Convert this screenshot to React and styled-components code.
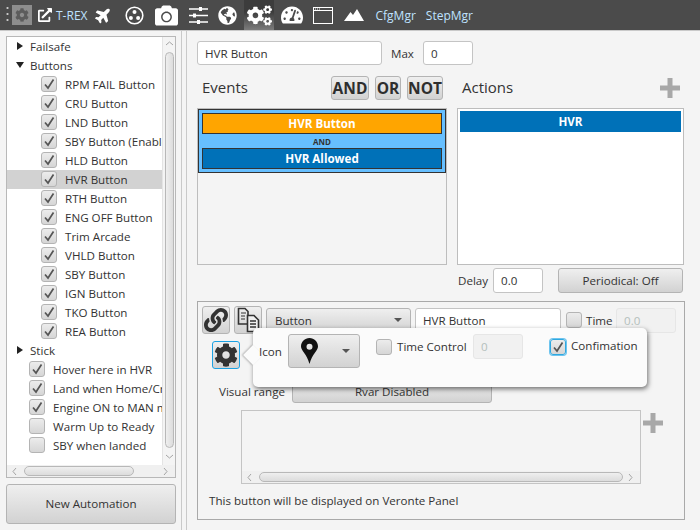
import React from "react";
import styled, { createGlobalStyle } from "styled-components";
import {
  FaCamera,
  FaCog,
  FaCogs,
  FaExternalLinkAlt,
  FaGlobeAmericas,
  FaLink,
  FaPlane,
  FaTachometerAlt,
} from "react-icons/fa";

const GlobalStyle = createGlobalStyle`
  html, body {
    margin: 0;
    padding: 0;
    background: #f4f4f4;
  }
  * {
    box-sizing: border-box;
  }
`;

const buttonFace = "linear-gradient(#efefef, #d2d2d2)";

const Page = styled.div`
  width: 700px;
  height: 530px;
  overflow: hidden;
  background: #f4f4f4;
  color: #333;
  font-family: "Open Sans", "Noto Sans", sans-serif;
  font-size: 11.6px;
`;

const Toolbar = styled.div`
  height: 30px;
  background: #4b4b4b;
  display: flex;
  align-items: center;
  padding-left: 6px;
`;

const Grip = styled.div`
  width: 3px;
  height: 20px;
  margin-right: 3px;
  background: radial-gradient(circle, #c8c8c8 1px, transparent 1.2px) 0 0 / 3px 6px;
`;

const ToolItem = styled.div`
  width: ${(p) => p.$w}px;
  margin-right: ${(p) => p.$gap || 0}px;
  height: 30px;
  display: flex;
  align-items: center;
  justify-content: center;
  color: #fff;
  flex: none;
  font-size: ${(p) => p.$size || 18}px;
`;

const SelfTile = styled(ToolItem)`
  height: 20px;
  background: #8d8d8d;
  color: #5c5c5c;
`;

const ActiveTile = styled(ToolItem)`
  background: linear-gradient(#3c3c3c 40%, #7c7c7c);
`;

const ToolText = styled.span`
  flex: none;
  color: #bfe2ff;
  font-size: 12px;
  margin-right: ${(p) => p.$gap || 0}px;
`;

const TiltedPlane = styled(FaPlane)`
  transform: rotate(-45deg);
`;

const Body = styled.div`
  height: 500px;
  display: flex;
  border-top: 1px solid #c9c9c9;
`;

const Sidebar = styled.aside`
  width: 181px;
  flex: none;
  padding: 5px 5px 5px 6px;
  display: flex;
  flex-direction: column;
  gap: 6px;
`;

const Divider = styled.div`
  width: 6px;
  flex: none;
  border-left: 1px solid #c9c9c9;
  border-right: 1px solid #c9c9c9;
`;

const TreeBox = styled.div`
  height: 442px;
  border: 1px solid #b8b8b8;
  background: #f4f4f4;
  display: flex;
  flex-direction: column;
`;

const TreeMain = styled.div`
  flex: 1;
  display: flex;
  min-height: 0;
`;

const TreeList = styled.div`
  width: 156px;
  background: #fff;
  overflow: hidden;
`;

const Row = styled.div`
  height: 19px;
  padding-left: ${(p) => p.$indent}px;
  padding-bottom: 1px;
  display: flex;
  align-items: center;
  white-space: nowrap;
  background: ${(p) => (p.$selected ? "#d2d2d2" : "transparent")};
`;

const Caret = styled.span`
  width: 0;
  height: 0;
  flex: none;
  margin-right: 6px;
  border-style: solid;
  border-color: transparent;
  ${(p) =>
    p.$open
      ? "border-width: 6px 4px 0; border-top-color: #222; margin-left: -1px;"
      : "border-width: 4px 0 4px 6px; border-left-color: #222; margin-right: 7px;"}
`;

const Check = styled.span`
  width: 16px;
  height: 16px;
  flex: none;
  border: 1px solid ${(p) => (p.$focused ? "#2fa8e0" : "#b4b4b4")};
  border-radius: 3px;
  background: linear-gradient(#ececec, #d6d6d6);
  display: flex;
  align-items: center;
  justify-content: center;
  box-shadow: ${(p) => (p.$focused ? "0 0 0 1px #6ec4ee" : "none")};
`;

const RowCheck = styled(Check)`
  margin-right: 8px;
`;

const VScroll = styled.div`
  width: 13px;
  flex: none;
  border-left: 1px solid #e4e4e4;
  display: flex;
  flex-direction: column;
  align-items: center;
  padding: 3px 0;
`;

const VThumb = styled.div`
  width: 9px;
  flex: 1;
  margin: 3px 0 5px;
  border: 1px solid #b8b8b8;
  border-radius: 5px;
  background: linear-gradient(90deg, #efefef, #dcdcdc);
`;

const HScroll = styled.div`
  height: 12px;
  flex: none;
  display: flex;
  align-items: center;
  gap: 4px;
  padding: 0 4px;
  background: #f0f0f0;
`;

const HThumb = styled.div`
  height: 10px;
  flex: ${(p) => (p.$w ? `0 0 ${p.$w}px` : 1)};
  border: 1px solid #b8b8b8;
  border-radius: 5px;
  background: linear-gradient(#efefef, #dcdcdc);
`;

const Spacer = styled.div`
  flex: 1;
`;

const ChevronSvg = styled.svg`
  flex: none;
`;

const Btn = styled.button`
  font: inherit;
  color: #333;
  padding: 0;
  border: 1px solid #b4b4b4;
  border-radius: 3px;
  background: ${buttonFace};
  display: flex;
  align-items: center;
  justify-content: center;
  flex: none;
  width: ${(p) => (p.$w ? `${p.$w}px` : "auto")};
  height: ${(p) => p.$h}px;
`;

const NewBtn = styled(Btn)`
  padding-bottom: 2px;
`;

const BoldBtn = styled(Btn)`
  font-weight: 700;
  font-size: 15.5px;
  color: #2e2e2e;
`;

const IconBtn = styled(Btn)`
  font-size: 24px;
  color: #333;
  border-color: ${(p) => (p.$focused ? "#1ba1e2" : "#b4b4b4")};
`;

const PeriodicalBtn = styled(Btn)`
  margin-left: 15px;
`;

const Main = styled.main`
  flex: 1;
  padding: 10px 15px 0 10px;
  min-width: 0;
`;

const FieldRow = styled.div`
  display: flex;
  align-items: center;
`;

const MaxLabel = styled.span`
  width: 32px;
  margin-left: 9px;
`;

const Input = styled.div`
  width: ${(p) => p.$w}px;
  height: ${(p) => p.$h || 24}px;
  flex: none;
  background: #fff;
  border: 1px solid #c4c4c4;
  border-radius: 3px;
  padding: 0 7px;
  display: flex;
  align-items: center;
  white-space: nowrap;
`;

const DisabledInput = styled(Input)`
  background: #f1f1f1;
  border-color: #e6e6e6;
  color: #b4c0bc;
`;

const Columns = styled.div`
  display: grid;
  grid-template-columns: 250px 227px;
  gap: 10px;
  margin-top: 11px;
`;

const Column = styled.section`
  display: flex;
  flex-direction: column;
`;

const Header = styled.div`
  height: 24px;
  display: flex;
  align-items: center;
  padding: 0 4px 0 5px;
  margin-bottom: 8px;
`;

const Title = styled.span`
  font-size: 15px;
  flex: 1;
  padding-bottom: 2px;
`;

const LogicBtns = styled.div`
  display: flex;
  gap: 6px;
`;

const ListBox = styled.div`
  height: 157px;
  border: 1px solid #bdbdbd;
  background: ${(p) => (p.$white ? "#fff" : "#f4f4f4")};
  padding: ${(p) => (p.$white ? "2px" : "0")};
`;

const Group = styled.div`
  height: 64px;
  background: #66bfff;
  border: 1px solid #333;
  padding: 3px;
  display: flex;
  flex-direction: column;
`;

const Chip = styled.div`
  height: ${(p) => p.$h || 21}px;
  background: ${(p) => p.$bg};
  border: ${(p) => (p.$flat ? "none" : "1px solid #333")};
  color: #fff;
  font-weight: 700;
  display: flex;
  align-items: center;
  justify-content: center;
`;

const AndLabel = styled.div`
  height: 14px;
  font-size: 8px;
  font-weight: 700;
  color: #333;
  display: flex;
  align-items: center;
  justify-content: center;
`;

const DelayRow = styled(FieldRow)`
  margin-top: 3px;
  padding-left: 1px;
  height: 25px;
`;

const DelayLabel = styled.span`
  width: 35px;
`;

const Lower = styled.section`
  position: relative;
  width: 488px;
  height: 219px;
  margin-top: 8px;
  border: 1px solid #a9a9a9;
  padding: 4px 4px 0;
`;

const LowerTop = styled.div`
  display: flex;
  align-items: center;
  height: 28px;
  gap: 4px;
`;

const Combo = styled(Btn)`
  justify-content: space-between;
  padding: 0 ${(p) => p.$pad || 8}px;
`;

const ComboArrow = styled.span`
  width: 0;
  height: 0;
  border-style: solid;
  border-width: 4px 4px 0;
  border-color: #555 transparent transparent;
`;

const TimeBox = styled.div`
  display: flex;
  align-items: center;
  margin-left: 1px;
`;

const TimeLabel = styled.span`
  width: 30px;
  margin-left: 4px;
`;

const GearSlot = styled.div`
  margin: 7px 0 0 10px;
  height: 28px;
`;

const Popover = styled.div`
  position: absolute;
  left: 55px;
  top: 26px;
  width: 394px;
  height: 59px;
  background: #fbfbfb;
  border-radius: 5px;
  box-shadow: 1px 2px 5px rgba(0, 0, 0, 0.55);
  display: flex;
  align-items: flex-start;
  padding: 6px 0 0 6px;
`;

const PopArrow = styled.div`
  position: absolute;
  left: -7px;
  top: 20px;
  width: 14px;
  height: 14px;
  background: #fbfbfb;
  transform: rotate(45deg);
  box-shadow: -1px 1px 2px rgba(0, 0, 0, 0.25);
`;

const PopIcon = styled.span`
  width: 29px;
  line-height: 36px;
  position: relative;
`;

const PopCheck = styled.div`
  display: flex;
  align-items: center;
  margin-left: ${(p) => p.$left}px;
  margin-top: ${(p) => p.$top}px;
  position: relative;
`;

const PopLabel = styled.span`
  width: ${(p) => p.$w}px;
  margin-left: 5px;
  padding-bottom: ${(p) => p.$raise || 0}px;
  white-space: nowrap;
`;

const PinWrap = styled.span`
  display: flex;
  margin-left: 3px;
`;

const RangeRow = styled.div`
  display: flex;
  align-items: center;
  margin: 10px 0 7px 17px;
  height: 24px;
`;

const RangeLabel = styled.span`
  width: 73px;
`;

const TableRow = styled.div`
  display: flex;
  align-items: flex-start;
  margin-left: 39px;
`;

const TableBox = styled.div`
  width: 400px;
  height: 74px;
  border: 1px solid #c4c4c4;
  display: flex;
  flex-direction: column;
  justify-content: flex-end;
`;

const PlusIcon = styled.svg`
  flex: none;
  display: block;
`;

const TablePlus = styled.div`
  margin: 3px 0 0 2px;
`;

const Note = styled.div`
  margin: 9px 0 0 7px;
`;

const CheckMark = () => (
  <svg width="12" height="12" viewBox="0 0 12 12">
    <path d="M2 6.5 L5 10 L10.5 1.5" fill="none" stroke="#555" strokeWidth="1.7" />
  </svg>
);

const Chevron = ({ dir }) => {
  const paths = {
    up: "M1 5 L4.5 2 L8 5",
    down: "M1 2 L4.5 5 L8 2",
    left: "M5 1 L2 4.5 L5 8",
    right: "M2 1 L5 4.5 L2 8",
  };
  return (
    <ChevronSvg width="9" height="9" viewBox="0 0 9 9">
      <path d={paths[dir]} fill="none" stroke="#a4a4a4" strokeWidth="1" />
    </ChevronSvg>
  );
};

const Plus = () => (
  <PlusIcon width="20" height="20" viewBox="0 0 20 20">
    <path d="M7.5 0h5v7.5H20v5h-7.5V20h-5v-7.5H0v-5h7.5z" fill="#a8a8a8" />
  </PlusIcon>
);

const TripleDot = () => (
  <svg width="19" height="19" viewBox="0 0 19 19">
    <circle cx="9.5" cy="9.5" r="8.3" fill="none" stroke="#fff" strokeWidth="1.6" />
    <circle cx="9.5" cy="6" r="2" fill="#fff" />
    <circle cx="5.9" cy="12" r="2" fill="#fff" />
    <circle cx="13.1" cy="12" r="2" fill="#fff" />
  </svg>
);

const SlidersIcon = () => (
  <svg width="19" height="19" viewBox="0 0 19 19">
    <path d="M0 3h19M0 9.500h19M0 16h19" stroke="#fff" strokeWidth="1.300" />
    <path d="M10 1h3v4h-3zM4 7.500h3v4H4zM8 14h3v4H8z" fill="#fff" />
  </svg>
);

const WindowIcon = () => (
  <svg width="20" height="17" viewBox="0 0 20 17">
    <rect x="0.5" y="0.5" width="19" height="16" fill="none" stroke="#fff" />
    <path d="M1 3.5h18" stroke="#fff" />
    <path d="M2 2h1M4 2h1M6 2h1" stroke="#fff" />
  </svg>
);

const Mountains = () => (
  <svg width="20" height="12" viewBox="0 0 20 12">
    <path d="M0 12 L6.5 3 L9 6 L13 0 L20 12z" fill="#fff" />
  </svg>
);

const CopyIcon = () => (
  <svg width="25" height="26" viewBox="0 0 25 26">
    <path d="M12 17H2.5V1.5H9l3 3V8" fill="none" stroke="#333" strokeWidth="1.6" />
    <path d="M5 6h5M5 9h4M5 12h4" stroke="#333" strokeWidth="1.2" />
    <path d="M11.500 8.500H18l4.500 4.500v11.500h-11z" fill="#f0f0f0" stroke="#333" strokeWidth="1.6" />
    <path d="M14 14h6M14 17h6M14 20h6" stroke="#333" strokeWidth="1.3" />
  </svg>
);

const MapPin = () => (
  <svg width="17" height="26" viewBox="0 0 17 26">
    <path
      fillRule="evenodd"
      d="M8.500 0C3.800 0 0 3.700 0 8.500 0 12.500 5.800 16 8.500 26 11.200 16 17 12.500 17 8.500 17 3.700 13.200 0 8.500 0zM8.500 5.700a3 3 0 1 1 0 6a3 3 0 0 1 0-6z"
      fill="#111"
    />
  </svg>
);

const buttonChecks = [
  { label: "RPM FAIL Button" },
  { label: "CRU Button" },
  { label: "LND Button" },
  { label: "SBY Button (Enabled)" },
  { label: "HLD Button" },
  { label: "HVR Button", selected: true },
  { label: "RTH Button" },
  { label: "ENG OFF Button" },
  { label: "Trim Arcade" },
  { label: "VHLD Button" },
  { label: "SBY Button" },
  { label: "IGN Button" },
  { label: "TKO Button" },
  { label: "REA Button" },
];

const stickChecks = [
  { label: "Hover here in HVR", checked: true },
  { label: "Land when Home/Cruise", checked: true },
  { label: "Engine ON to MAN mode", checked: true },
  { label: "Warm Up to Ready", checked: false },
  { label: "SBY when landed", checked: false },
];

const App = () => (
  <Page>
    <GlobalStyle />
    <Toolbar>
      <Grip />
      <SelfTile $w={20} $gap={5} $size={14}>
        <FaCog />
      </SelfTile>
      <ToolItem $w={15} $gap={4} $size={14}>
        <FaExternalLinkAlt />
      </ToolItem>
      <ToolText $gap={8}>T-REX</ToolText>
      <ToolItem $w={17} $gap={13}>
        <TiltedPlane />
      </ToolItem>
      <ToolItem $w={19} $gap={11}>
        <TripleDot />
      </ToolItem>
      <ToolItem $w={23} $gap={11} $size={23}>
        <FaCamera />
      </ToolItem>
      <ToolItem $w={19} $gap={10}>
        <SlidersIcon />
      </ToolItem>
      <ToolItem $w={19} $gap={7} $size={19}>
        <FaGlobeAmericas />
      </ToolItem>
      <ActiveTile $w={30} $gap={7} $size={25}>
        <FaCogs />
      </ActiveTile>
      <ToolItem $w={22} $gap={10} $size={22}>
        <FaTachometerAlt />
      </ToolItem>
      <ToolItem $w={20} $gap={11}>
        <WindowIcon />
      </ToolItem>
      <ToolItem $w={20} $gap={11}>
        <Mountains />
      </ToolItem>
      <ToolText $gap={10}>CfgMgr</ToolText>
      <ToolText>StepMgr</ToolText>
    </Toolbar>
    <Body>
      <Sidebar>
        <TreeBox>
          <TreeMain>
            <TreeList>
              <Row $indent={10}>
                <Caret />
                Failsafe
              </Row>
              <Row $indent={10}>
                <Caret $open />
                Buttons
              </Row>
              {buttonChecks.map((item) => (
                <Row key={item.label} $indent={34} $selected={item.selected}>
                  <RowCheck>
                    <CheckMark />
                  </RowCheck>
                  {item.label}
                </Row>
              ))}
              <Row $indent={10}>
                <Caret />
                Stick
              </Row>
              {stickChecks.map((item) => (
                <Row key={item.label} $indent={22}>
                  <RowCheck>{item.checked && <CheckMark />}</RowCheck>
                  {item.label}
                </Row>
              ))}
            </TreeList>
            <VScroll>
              <Chevron dir="up" />
              <VThumb />
              <Chevron dir="down" />
            </VScroll>
          </TreeMain>
          <HScroll>
            <Chevron dir="left" />
            <HThumb $w={110} />
            <Spacer />
            <Chevron dir="right" />
          </HScroll>
        </TreeBox>
        <NewBtn $h={40}>New Automation</NewBtn>
      </Sidebar>
      <Divider />
      <Main>
        <FieldRow>
          <Input $w={185}>HVR Button</Input>
          <MaxLabel>Max</MaxLabel>
          <Input $w={50}>0</Input>
        </FieldRow>
        <Columns>
          <Column>
            <Header>
              <Title>Events</Title>
              <LogicBtns>
                <BoldBtn $w={38} $h={24}>AND</BoldBtn>
                <BoldBtn $w={26} $h={24}>OR</BoldBtn>
                <BoldBtn $w={36} $h={24}>NOT</BoldBtn>
              </LogicBtns>
            </Header>
            <ListBox>
              <Group>
                <Chip $bg="#ffa500">HVR Button</Chip>
                <AndLabel>AND</AndLabel>
                <Chip $bg="#0071b8">HVR Allowed</Chip>
              </Group>
            </ListBox>
          </Column>
          <Column>
            <Header>
              <Title>Actions</Title>
              <Plus />
            </Header>
            <ListBox $white>
              <Chip $bg="#0071b8" $flat>HVR</Chip>
            </ListBox>
            <DelayRow>
              <DelayLabel>Delay</DelayLabel>
              <Input $w={50} $h={25}>0.0</Input>
              <PeriodicalBtn $w={125} $h={25}>Periodical: Off</PeriodicalBtn>
            </DelayRow>
          </Column>
        </Columns>
        <Lower>
          <LowerTop>
            <IconBtn $w={28} $h={28}>
              <FaLink />
            </IconBtn>
            <IconBtn $w={28} $h={28}>
              <CopyIcon />
            </IconBtn>
            <Combo $w={145} $h={25}>
              Button
              <ComboArrow />
            </Combo>
            <Input $w={146} $h={25}>HVR Button</Input>
            <TimeBox>
              <Check />
              <TimeLabel>Time</TimeLabel>
              <DisabledInput $w={60} $h={25}>0.0</DisabledInput>
            </TimeBox>
          </LowerTop>
          <GearSlot>
            <IconBtn $w={28} $h={28} $focused>
              <FaCog />
            </IconBtn>
          </GearSlot>
          <Popover>
            <PopArrow />
            <PopIcon>Icon</PopIcon>
            <Combo $w={72} $h={34} $pad={9}>
              <PinWrap>
                <MapPin />
              </PinWrap>
              <ComboArrow />
            </Combo>
            <PopCheck $left={16} $top={0}>
              <Check />
              <PopLabel $w={76}>Time Control</PopLabel>
              <DisabledInput $w={50} $h={25}>0</DisabledInput>
            </PopCheck>
            <PopCheck $left={27} $top={4}>
              <Check $focused>
                <CheckMark />
              </Check>
              <PopLabel $w={70} $raise={2}>Confimation</PopLabel>
            </PopCheck>
          </Popover>
          <RangeRow>
            <RangeLabel>Visual range</RangeLabel>
            <Btn $w={200} $h={24}>Rvar Disabled</Btn>
          </RangeRow>
          <TableRow>
            <TableBox>
              <HScroll>
                <Chevron dir="left" />
                <HThumb />
                <Chevron dir="right" />
              </HScroll>
            </TableBox>
            <TablePlus>
              <Plus />
            </TablePlus>
          </TableRow>
          <Note>This button will be displayed on Veronte Panel</Note>
        </Lower>
      </Main>
    </Body>
  </Page>
);

export default App;
